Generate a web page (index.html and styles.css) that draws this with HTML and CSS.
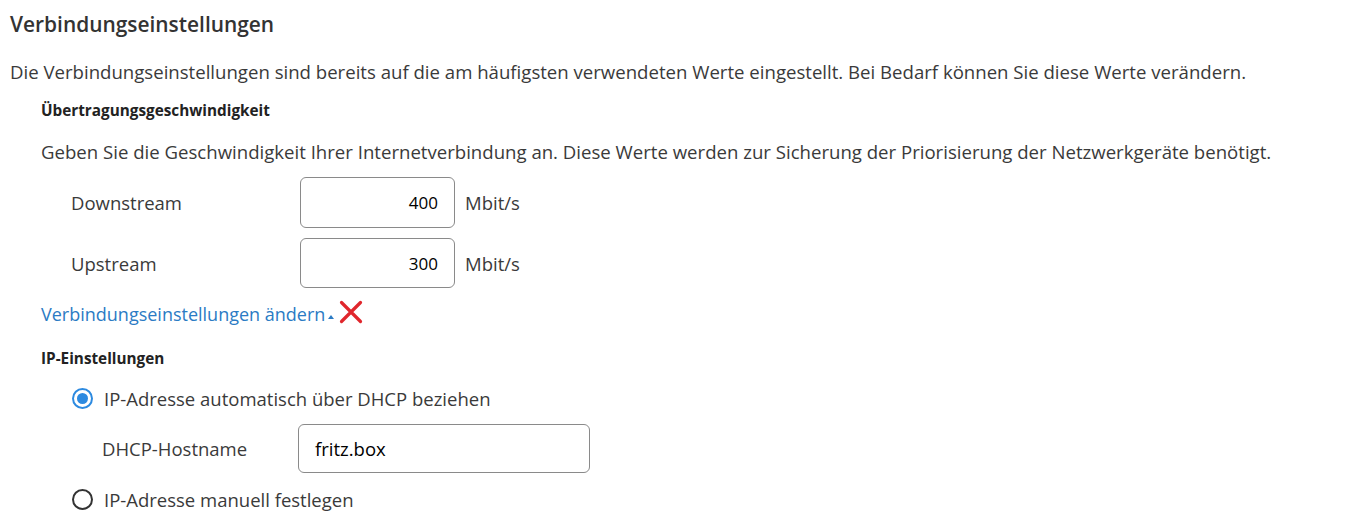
FILE: index.html
```html
<!DOCTYPE html>
<html lang="de">
<head>
<meta charset="utf-8">
<link rel="stylesheet" href="styles.css">
</head>
<body>
<div class="page">
  <h2 class="title">Verbindungseinstellungen</h2>
  <p class="intro">Die Verbindungseinstellungen sind bereits auf die am häufigsten verwendeten Werte eingestellt. Bei Bedarf können Sie diese Werte verändern.</p>
  <div class="section">
    <h3 class="subtitle sub-speed">Übertragungsgeschwindigkeit</h3>
    <p class="hint">Geben Sie die Geschwindigkeit Ihrer Internetverbindung an. Diese Werte werden zur Sicherung der Priorisierung der Netzwerkgeräte benötigt.</p>
    <div class="rows">
      <div class="row row-down">
        <span class="label">Downstream</span>
        <span class="field num">400</span>
        <span class="unit">Mbit/s</span>
      </div>
      <div class="row row-up">
        <span class="label">Upstream</span>
        <span class="field num">300</span>
        <span class="unit">Mbit/s</span>
      </div>
    </div>
    <div class="toggle">
      <a class="link">Verbindungseinstellungen ändern</a><span class="caret"></span>
      <svg class="xmark" width="24" height="24" viewBox="0 0 24 24"><path d="M2.5 2.5 L21.5 21.5 M21.5 2.5 L2.5 21.5" stroke="#e0262c" stroke-width="3.2" stroke-linecap="round" fill="none"/></svg>
    </div>
    <h3 class="subtitle sub-ip">IP-Einstellungen</h3>
    <div class="options">
      <label class="radio-row">
        <span class="radio checked"></span>
        <span class="radio-text">IP-Adresse automatisch über DHCP beziehen</span>
      </label>
      <div class="host-row">
        <span class="host-label">DHCP-Hostname</span>
        <span class="field host">fritz.box</span>
      </div>
      <label class="radio-row second">
        <span class="radio"></span>
        <span class="radio-text">IP-Adresse manuell festlegen</span>
      </label>
    </div>
  </div>
</div>
</body>
</html>
```

FILE: styles.css
```css
html, body {
  margin: 0;
  padding: 0;
  background: #ffffff;
}
body {
  font-family: "Open Sans", "Liberation Sans", sans-serif;
  color: #3a3a3a;
}
.page {
  padding: 10px 0 0 10px;
}
.title {
  margin: 0;
  font-size: 20.9px;
  line-height: 28px;
  font-weight: 600;
  color: #333333;
}
.intro {
  margin: 21px 0 0 0;
  font-size: 18.6px;
  line-height: 26px;
}
.section {
  padding-left: 31px;
}
.subtitle {
  margin: 0;
  font-size: 15.3px;
  line-height: 22px;
  font-weight: 700;
  color: #222222;
}
.sub-speed {
  margin-top: 14px;
}
.hint {
  margin: 18px 0 0 0;
  font-size: 18.6px;
  line-height: 26px;
}
.rows {
  margin-top: 12px;
  padding-left: 30px;
  display: flex;
  flex-direction: column;
  gap: 10px;
}
.row {
  display: flex;
  align-items: center;
  font-size: 18.5px;
}
.label {
  width: 229px;
}
.field {
  box-sizing: border-box;
  border: 1px solid #8a8a8a;
  border-radius: 6px;
  font-family: "Open Sans", "DejaVu Sans", sans-serif;
  font-size: 17px;
  color: #000000;
  display: flex;
  align-items: center;
}
.num {
  width: 155px;
  height: 51px;
  justify-content: flex-end;
  padding-right: 16px;
}
.row-up .num {
  height: 50px;
}
.unit {
  margin-left: 10px;
}
.toggle {
  margin-top: 13px;
  display: flex;
  align-items: center;
  height: 26px;
}
.link {
  font-size: 18px;
  color: #2b7bc4;
}
.caret {
  width: 0;
  height: 0;
  border-left: 3px solid transparent;
  border-right: 3px solid transparent;
  border-bottom: 4px solid #2b7bc4;
  margin: 6px 0 0 3px;
}
.xmark {
  margin: -5px 0 0 5px;
}
.sub-ip {
  margin-top: 20px;
}
.options {
  margin-top: 16px;
  padding-left: 30px;
  display: flex;
  flex-direction: column;
}
.radio-row {
  display: flex;
  align-items: center;
  height: 26px;
  font-size: 18.5px;
}
.radio-row.second {
  margin-top: 13px;
}
.radio {
  box-sizing: border-box;
  width: 21px;
  height: 21px;
  margin-left: 1px;
  border: 2px solid #333333;
  border-radius: 50%;
  background: #ffffff;
  display: flex;
  align-items: center;
  justify-content: center;
}
.radio.checked {
  border-color: #2d8ae0;
}
.radio.checked::after {
  content: "";
  width: 11px;
  height: 11px;
  border-radius: 50%;
  background: #2d8ae0;
}
.radio-text {
  margin-left: 11px;
}
.host-row {
  margin-top: 13px;
  padding-left: 31px;
  display: flex;
  align-items: center;
  font-size: 18.5px;
}
.host-label {
  width: 196px;
}
.host {
  width: 292px;
  height: 49px;
  padding-left: 16px;
  font-family: "Open Sans", "Liberation Sans", sans-serif;
  font-size: 18.5px;
}
```
